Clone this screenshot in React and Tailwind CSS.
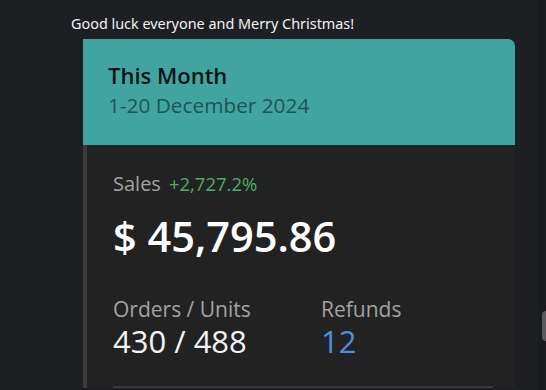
export default function App() {
  return (
    <div
      className="h-[390px] w-[546px] overflow-hidden bg-[#1e1f22] flex"
      style={{ fontFamily: '"Open Sans", "Noto Sans", sans-serif' }}
    >
      <div className="flex-1 flex flex-col">
        <p
          className="pl-[71px] pt-[14px] text-[14.4px] leading-[20px] text-[#f2f3f5]"
          style={{ fontFamily: '"Noto Sans", sans-serif' }}
        >
          Good luck everyone and Merry Christmas!
        </p>
        <div className="ml-[83px] mt-[5px] w-[432px] flex flex-col">
          <div className="h-[106px] bg-[#42a4a1] rounded-tr-[7px] pl-[25px] pt-[22px]">
            <h2 className="text-[22px] leading-[28px] font-semibold text-[#0b1514]">This Month</h2>
            <p className="text-[20.8px] leading-[32px] text-[#1c5653]">1-20 December 2024</p>
          </div>
          <div className="flex-1 bg-[#222222] border-l-[4px] border-[#3a3a3a] pl-[26px] pr-[22px] pt-[26px]">
            <div className="flex items-baseline gap-[8px] h-[26px]">
              <span className="text-[20px] leading-[26px] text-[#a3a3a3]">Sales</span>
              <span className="text-[18.5px] leading-[24px] font-medium text-[#4caf63]">+2,727.2%</span>
            </div>
            <div className="mt-[14px] text-[41.5px] leading-[50px] font-semibold text-white">$ 45,795.86</div>
            <div className="mt-[35px] flex">
              <div className="w-[208px]">
                <div className="text-[21px] leading-[27px] text-[#a3a3a3]">Orders / Units</div>
                <div className="text-[31px] leading-[36px] text-[#f5f5f5]">430 / 488</div>
              </div>
              <div>
                <div className="text-[21px] leading-[27px] text-[#a3a3a3]">Refunds</div>
                <div className="text-[31px] leading-[36px] text-[#4a8fe0]">12</div>
              </div>
            </div>
            <div className="mt-[27px] h-[2px] bg-[#3a3a3a]" />
          </div>
        </div>
      </div>
      <div className="w-[8px] bg-[#1a1b1e] relative">
        <div className="absolute right-0 top-[311px] h-[30px] w-[4px] rounded-l bg-[#5a5a5e]" />
      </div>
    </div>
  );
}
